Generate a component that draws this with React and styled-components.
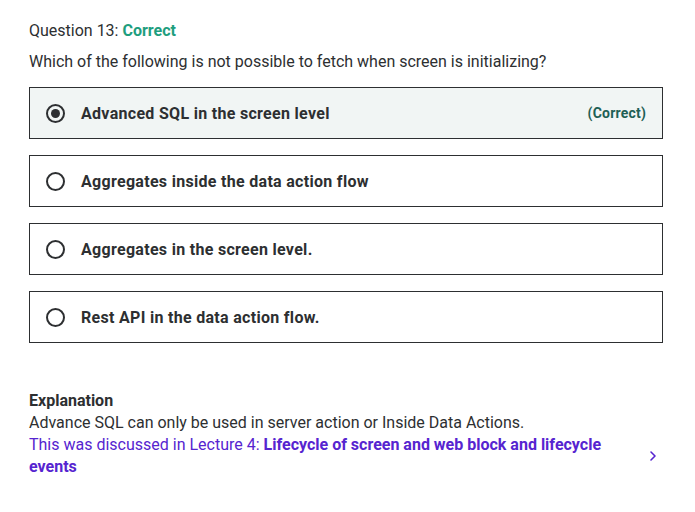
import React from "react";
import styled, { createGlobalStyle } from "styled-components";

const GlobalStyle = createGlobalStyle`
  body {
    margin: 0;
    background: #ffffff;
    font-family: "Roboto", "Liberation Sans", sans-serif;
    color: #2d2f31;
  }
`;

const answers = [
  { text: "Advanced SQL in the screen level", selected: true, correct: true },
  { text: "Aggregates inside the data action flow" },
  { text: "Aggregates in the screen level." },
  { text: "Rest API in the data action flow." },
];

const App = () => {
  return (
    <>
      <GlobalStyle />
      <Page>
        <Title>
          Question 13: <Status>Correct</Status>
        </Title>
        <Prompt>Which of the following is not possible to fetch when screen is initializing?</Prompt>
        <AnswerList>
          {answers.map((a) => (
            <Answer key={a.text} $selected={a.selected}>
              <Radio $checked={a.selected} />
              <AnswerText>{a.text}</AnswerText>
              {a.correct && <Tag>(Correct)</Tag>}
            </Answer>
          ))}
        </AnswerList>
        <Explanation>
          <ExplainHeading>Explanation</ExplainHeading>
          <ExplainText>Advance SQL can only be used in server action or Inside Data Actions.</ExplainText>
          <LectureRow>
            <LectureText>
              This was discussed in Lecture 4: <b>Lifecycle of screen and web block and lifecycle events</b>
            </LectureText>
            <Chevron viewBox="0 0 24 24">
              <path d="M9 6l6 6-6 6" fill="none" stroke="currentColor" strokeWidth="2.4" strokeLinecap="round" strokeLinejoin="round" />
            </Chevron>
          </LectureRow>
        </Explanation>
      </Page>
    </>
  );
};

const Page = styled.div`
  width: 634px;
  padding: 21px 0 0 29px;
`;

const Title = styled.div`
  font-size: 16px;
  line-height: 20px;
`;

const Status = styled.span`
  font-weight: 700;
  color: #1e9e7e;
`;

const Prompt = styled.div`
  margin-top: 11px;
  font-size: 16px;
  line-height: 20px;
`;

const AnswerList = styled.div`
  display: flex;
  flex-direction: column;
  gap: 16px;
  margin-top: 15px;
`;

const Answer = styled.div`
  display: flex;
  align-items: center;
  gap: 16px;
  height: 52px;
  box-sizing: border-box;
  padding: 0 16px;
  border: 1px solid #2d2f31;
  background: ${(p) => (p.$selected ? "#f1f5f4" : "#ffffff")};
`;

const Radio = styled.span`
  width: 19px;
  height: 19px;
  box-sizing: border-box;
  border: 2px solid #2d2f31;
  border-radius: 50%;
  flex-shrink: 0;
  display: flex;
  align-items: center;
  justify-content: center;

  &::after {
    content: "";
    display: ${(p) => (p.$checked ? "block" : "none")};
    width: 9px;
    height: 9px;
    border-radius: 50%;
    background: #2d2f31;
  }
`;

const AnswerText = styled.span`
  flex: 1;
  font-size: 16px;
  font-weight: 700;
  letter-spacing: 0.3px;
`;

const Tag = styled.span`
  font-size: 14px;
  font-weight: 700;
  letter-spacing: 0.2px;
  color: #1e6055;
`;

const Explanation = styled.div`
  margin-top: 47px;
  font-size: 16px;
  line-height: 22px;
`;

const ExplainHeading = styled.div`
  font-weight: 700;
`;

const ExplainText = styled.div``;

const LectureRow = styled.div`
  display: flex;
  align-items: center;
  gap: 24px;
`;

const LectureText = styled.div`
  flex: 1;
  color: #5624d0;

  b {
    font-weight: 700;
  }
`;

const Chevron = styled.svg`
  width: 16px;
  height: 16px;
  color: #5624d0;
  flex-shrink: 0;
  margin-right: 2px;
`;

export default App;
